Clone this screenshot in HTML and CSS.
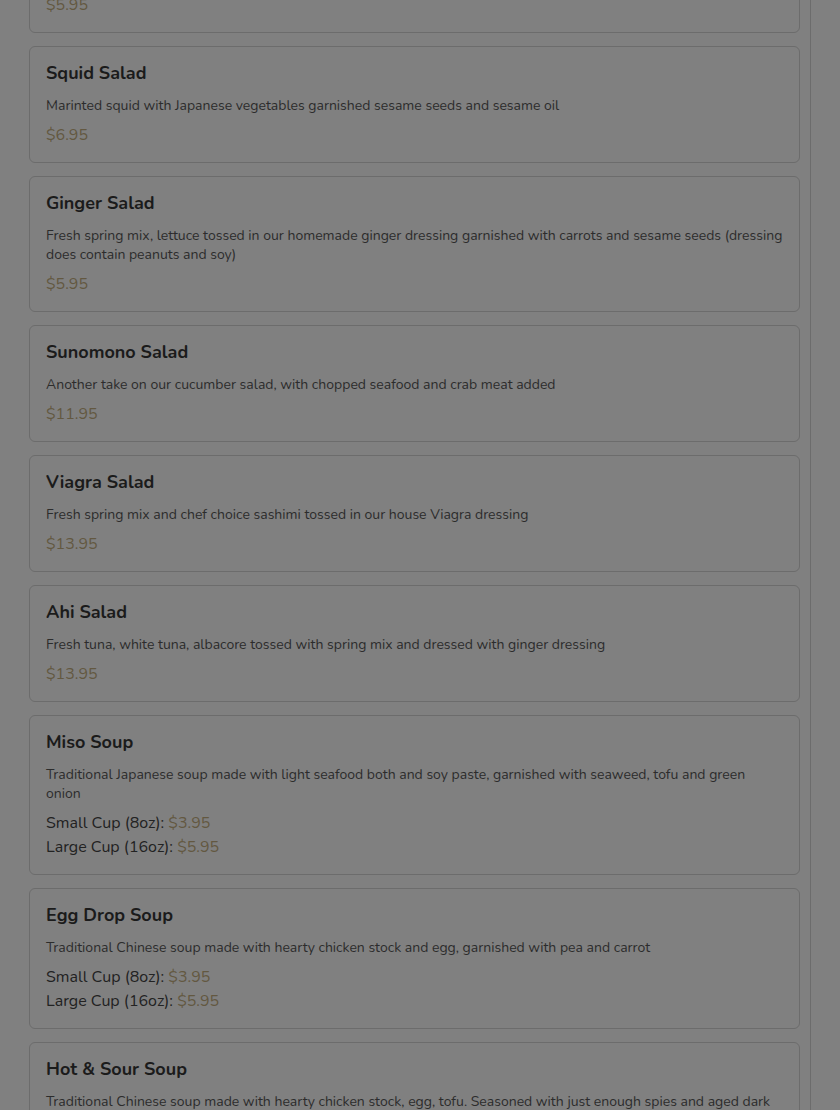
FILE: index.html
```html
<!DOCTYPE html>
<html>
<head>
<meta charset="utf-8">
<link rel="stylesheet" href="styles.css">
</head>
<body>
<div class="panel">
  <div class="list">
    <div class="card">
      <h3 class="title">Seaweed Salad</h3>
      <p class="desc">Seaweed salad</p>
      <div class="price">$5.95</div>
    </div>
    <div class="card">
      <h3 class="title">Squid Salad</h3>
      <p class="desc">Marinted squid with Japanese vegetables garnished sesame seeds and sesame oil</p>
      <div class="price">$6.95</div>
    </div>
    <div class="card">
      <h3 class="title">Ginger Salad</h3>
      <p class="desc">Fresh spring mix, lettuce tossed in our homemade ginger dressing garnished with carrots and sesame seeds (dressing does contain peanuts and soy)</p>
      <div class="price">$5.95</div>
    </div>
    <div class="card">
      <h3 class="title">Sunomono Salad</h3>
      <p class="desc">Another take on our cucumber salad, with chopped seafood and crab meat added</p>
      <div class="price">$11.95</div>
    </div>
    <div class="card">
      <h3 class="title">Viagra Salad</h3>
      <p class="desc">Fresh spring mix and chef choice sashimi tossed in our house Viagra dressing</p>
      <div class="price">$13.95</div>
    </div>
    <div class="card">
      <h3 class="title">Ahi Salad</h3>
      <p class="desc">Fresh tuna, white tuna, albacore tossed with spring mix and dressed with ginger dressing</p>
      <div class="price">$13.95</div>
    </div>
    <div class="card">
      <h3 class="title">Miso Soup</h3>
      <p class="desc">Traditional Japanese soup made with light seafood both and soy paste, garnished with seaweed, tofu and green onion</p>
      <div class="size">Small Cup (8oz): <span class="amt">$3.95</span></div>
      <div class="size">Large Cup (16oz): <span class="amt">$5.95</span></div>
    </div>
    <div class="card">
      <h3 class="title">Egg Drop Soup</h3>
      <p class="desc">Traditional Chinese soup made with hearty chicken stock and egg, garnished with pea and carrot</p>
      <div class="size">Small Cup (8oz): <span class="amt">$3.95</span></div>
      <div class="size">Large Cup (16oz): <span class="amt">$5.95</span></div>
    </div>
    <div class="card">
      <h3 class="title">Hot &amp; Sour Soup</h3>
      <p class="desc">Traditional Chinese soup made with hearty chicken stock, egg, tofu. Seasoned with just enough spies and aged dark vinegar</p>
      <div class="size">Small Cup (8oz): <span class="amt">$3.95</span></div>
      <div class="size">Large Cup (16oz): <span class="amt">$5.95</span></div>
    </div>
  </div>
</div>
</body>
</html>
```
FILE: styles.css
```css
html, body {
  margin: 0;
  padding: 0;
  background: #808080;
  height: 1110px;
  overflow: hidden;
}
body {
  font-family: "Nunito", "Lato", "Open Sans", sans-serif;
}
.panel {
  width: 811px;
  border-right: 1px solid #6c6c6c;
  min-height: 1110px;
  box-sizing: border-box;
}
.list {
  margin-top: -84px;
  padding-left: 29px;
  width: 771px;
  display: flex;
  flex-direction: column;
  gap: 13px;
}
.card {
  border: 1px solid #6c6c6c;
  border-radius: 6px;
  padding: 14px 16px 15px;
}
.title {
  margin: 0 0 11px;
  font-size: 18px;
  line-height: 24px;
  font-weight: 700;
  color: #1b1b1b;
}
.desc {
  margin: 0 0 8px;
  font-size: 14px;
  line-height: 19px;
  color: #2c2c2c;
}
.price, .amt {
  color: #635841;
}
.price, .size {
  font-size: 16px;
  line-height: 24px;
}
.size {
  color: #222222;
}
```
